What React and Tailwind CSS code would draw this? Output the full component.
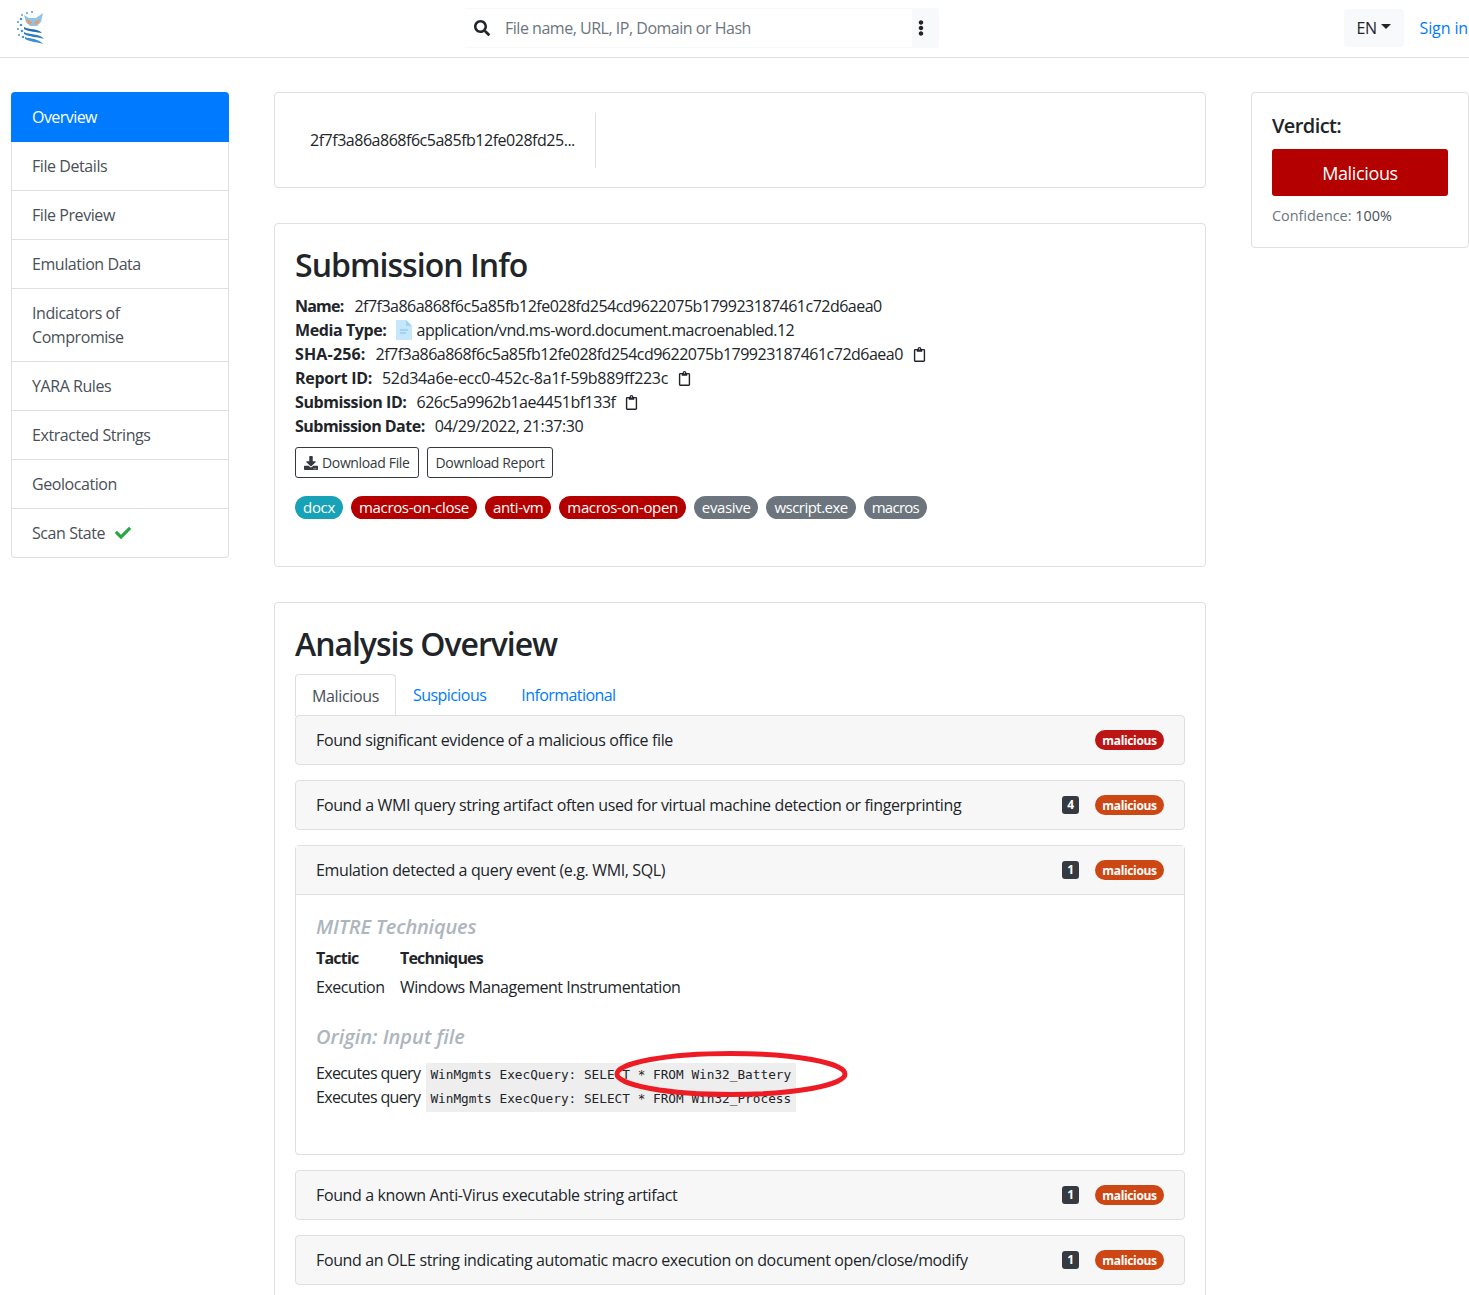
import React from 'react';
import { FaSearch, FaEllipsisV, FaDownload, FaCheck, FaRegClipboard } from 'react-icons/fa';

const navItems = ['File Details', 'File Preview', 'Emulation Data', 'Indicators of Compromise', 'YARA Rules', 'Extracted Strings', 'Geolocation'];

const tags = [
  { label: 'docx', color: 'bg-[#17a2b8] tracking-[-0.02em]' },
  { label: 'macros-on-close', color: 'bg-[#b50000]' },
  { label: 'anti-vm', color: 'bg-[#b50000]' },
  { label: 'macros-on-open', color: 'bg-[#b50000]' },
  { label: 'evasive', color: 'bg-[#6c757d]' },
  { label: 'wscript.exe', color: 'bg-[#6c757d] tracking-[-0.035em]' },
  { label: 'macros', color: 'bg-[#6c757d] tracking-[-0.05em]' },
];

const Logo = () => (
  <svg width="32" height="36" viewBox="0 0 32 36" fill="none">
    <path d="M9 5l5 3h7l7-5-2 9-4 4h-7l-4-4z" fill="#8cc4ec" />
    <path d="M11 9l6 3-1 2.5-3.5-1zM25 9l-6 3 1 2.5 3.5-1z" fill="#ea9a6c" />
    <path d="M9 17c5 3 14 1 18 6-5-1-13-1-18-4z" fill="#1f6db3" />
    <path d="M9 22c5 3 15 1 20 7-6-2-15-2-20-5z" fill="#2a7cc0" />
    <path d="M10 27c5 2 13 1 18 7-6-2-13-2-18-5z" fill="#3f8fce" />
    <g fill="#4a95d2">
      <circle cx="6" cy="9" r="1.3" /><circle cx="3" cy="12" r="1" /><circle cx="6" cy="15" r="1.3" />
      <circle cx="3" cy="19" r="1" /><circle cx="7" cy="21" r="1.3" /><circle cx="4" cy="25" r="1" />
      <circle cx="8" cy="27" r="1.3" /><circle cx="7" cy="5" r="0.9" /><circle cx="12" cy="3" r="0.9" /><circle cx="17" cy="2" r="1" />
    </g>
  </svg>
);

const FileIcon = () => (
  <svg className="mr-[4px] shrink-0" width="16" height="20" viewBox="0 0 16 20" fill="none">
    <path d="M1 0h9l6 6v13a1 1 0 0 1-1 1H1a1 1 0 0 1-1-1V1a1 1 0 0 1 1-1z" fill="#c5e6fb" />
    <path d="M10 0l6 6h-6z" fill="#9fd5f7" />
    <path d="M4 10h8M4 13h6" stroke="#94cdf5" strokeWidth="1.3" />
  </svg>
);

const Header = () => (
  <div className="flex h-[58px] items-center border-b border-[#dfdfdf] pb-px">
    <div className="ml-[15px] w-[449px] shrink-0"><Logo /></div>
    <div className="flex h-10 w-[475px] items-center rounded border-y border-[#f8f8f8]">
      <FaSearch className="ml-[10px] text-[#212529]" size={16} />
      <span className="ml-[15px] flex-1 tracking-[-0.03em] text-[#6c757d]">File name, URL, IP, Domain or Hash</span>
      <div className="flex h-10 w-[27px] items-center rounded-r bg-[#f8f9fa] pl-px text-[#212529]">
        <FaEllipsisV size={16} />
      </div>
    </div>
    <div className="ml-auto flex items-center">
      <div className="flex h-[38px] w-[60px] items-center justify-center gap-1 rounded bg-[#f8f9fa] text-[#212529]">
        EN
        <span className="mb-1 h-0 w-0 border-x-[5px] border-t-[5px] border-x-transparent border-t-[#212529]" />
      </div>
      <span className="ml-4 mr-px tracking-[-0.008em] text-[#007bff]">Sign in</span>
    </div>
  </div>
);

const Sidebar = () => (
  <div className="w-[218px] shrink-0 self-start tracking-[-0.027em]">
    <div className="flex h-[50px] items-center rounded-t bg-[#007bff] pl-[21px] tracking-[-0.035em] text-white">Overview</div>
    <div className="rounded-b border-x border-b border-[#dfdfdf] text-[#495057]">
      {navItems.map((item) => (
        <div key={item} className="border-b border-[#dfdfdf] py-3 pl-5 pr-5 leading-6">{item}</div>
      ))}
      <div className="flex items-center gap-[10px] py-3 pl-5 leading-6">
        Scan State
        <FaCheck className="text-[#28a745]" size={16} />
      </div>
    </div>
  </div>
);

const InfoRow = ({ label, value, copy, labelClass, valueClass, children }) => (
  <div className="flex h-6 items-center">
    <b className={`font-bold ${labelClass}`}>{label}</b>
    {children}
    <span className={valueClass}>{value}</span>
    {copy && <FaRegClipboard className="ml-[9px] text-[#212529]" size={15} />}
  </div>
);

const SubmissionInfo = () => (
  <div className="mt-[35px] h-[344px] rounded border border-[#dfdfdf] px-5 pt-[22px]">
    <h2 className="text-[32px] leading-[38px] font-semibold tracking-[-0.03em]">Submission Info</h2>
    <div className="mt-[10px] leading-6">
      <InfoRow label="Name:" labelClass="mr-[11px] tracking-[-0.05em]" valueClass="tracking-[-0.032em]" value="2f7f3a86a868f6c5a85fb12fe028fd254cd9622075b179923187461c72d6aea0" />
      <InfoRow label="Media Type:" labelClass="mr-[10px] tracking-[-0.025em]" valueClass="tracking-[-0.03em]" value="application/vnd.ms-word.document.macroenabled.12">
        <FileIcon />
      </InfoRow>
      <InfoRow label="SHA-256:" labelClass="mr-[10px] tracking-[0.01em]" valueClass="tracking-[-0.032em]" value="2f7f3a86a868f6c5a85fb12fe028fd254cd9622075b179923187461c72d6aea0" copy />
      <InfoRow label="Report ID:" labelClass="mr-[10px] tracking-[-0.02em]" valueClass="tracking-[-0.018em]" value="52d34a6e-ecc0-452c-8a1f-59b889ff223c" copy />
      <InfoRow label="Submission ID:" labelClass="mr-[10px] tracking-[-0.025em]" valueClass="tracking-[-0.032em]" value="626c5a9962b1ae4451bf133f" copy />
      <InfoRow label="Submission Date:" labelClass="mr-[10px] tracking-[-0.032em]" valueClass="tracking-[-0.025em]" value="04/29/2022, 21:37:30" />
    </div>
    <div className="mt-[9px] flex gap-2">
      <div className="flex h-[31px] items-center gap-1 rounded-[3px] border border-[#343a40] px-2 text-sm text-[#343a40]">
        <FaDownload size={14} />
        Download File
      </div>
      <div className="flex h-[31px] items-center rounded-[3px] border border-[#343a40] px-2 text-sm text-[#343a40]">Download Report</div>
    </div>
    <div className="mt-[18px] flex gap-2">
      {tags.map((t) => (
        <span key={t.label} className={`h-[23px] rounded-full px-2 text-[15px] leading-[23px] text-white ${t.color}`}>{t.label}</span>
      ))}
    </div>
  </div>
);

const SignalHeader = ({ title, count, color, open }) => (
  <div className={`flex items-center bg-[#f7f7f7] border-[#dfdfdf] pl-5 pr-5 ${open ? 'h-[49px] border-b' : 'h-[50px] rounded border'}`}>
    <span className="flex-1 tracking-[-0.0228em]">{title}</span>
    {count && (
      <span className="mr-4 flex h-[18px] w-[17px] items-center justify-center rounded-[3px] bg-[#343a40] text-xs font-bold text-white">{count}</span>
    )}
    <span className={`flex h-5 w-[69px] items-center justify-center rounded-full pt-px text-xs font-bold text-white ${color}`}>malicious</span>
  </div>
);

const QueryEllipse = () => (
  <svg className="absolute left-[317px] top-[154px]" width="236" height="50" viewBox="0 0 236 50" fill="none">
    <ellipse cx="118" cy="25" rx="114" ry="20.5" stroke="#ed1c24" strokeWidth="5" />
  </svg>
);

const OpenSignal = () => (
  <div className="rounded border border-[#dfdfdf]">
    <SignalHeader title="Emulation detected a query event (e.g. WMI, SQL)" count="1" color="bg-[#cc4714]" open />
    <div className="relative h-[259px] pl-5 pt-5">
      <h5 className="text-xl leading-6 font-semibold tracking-[-0.01em] italic text-[#adb5bd]">MITRE Techniques</h5>
      <div className="mt-[7px] grid grid-cols-[84px_1fr] leading-6 tracking-[-0.03em]">
        <b className="font-bold tracking-[-0.05em]">Tactic</b>
        <b className="font-bold tracking-[-0.05em]">Techniques</b>
        <span className="mt-[5px]">Execution</span>
        <span className="mt-[5px]">Windows Management Instrumentation</span>
      </div>
      <h5 className="mt-[26px] text-xl leading-6 font-semibold tracking-normal italic text-[#adb5bd]">Origin: Input file</h5>
      <div className="mt-[14px] flex leading-6">
        <div className="mr-[6px] -mt-[2px] tracking-[-0.04em]">
          <div>Executes query</div>
          <div>Executes query</div>
        </div>
        <div className="bg-[#eeeeee] pb-px pl-1 pr-[5px] font-['DejaVu_Sans_Mono',monospace] text-[12.75px] tracking-normal text-[#212529]">
          <div>WinMgmts ExecQuery: SELECT * FROM Win32_Battery</div>
          <div>WinMgmts ExecQuery: SELECT * FROM Win32_Process</div>
        </div>
      </div>
      <QueryEllipse />
    </div>
  </div>
);

const AnalysisOverview = () => (
  <div className="mt-[35px] rounded border border-[#dfdfdf] px-5 pb-5 pt-[22px]">
    <h2 className="text-[32px] leading-[38px] font-semibold tracking-[-0.032em]">Analysis Overview</h2>
    <div className="mt-[11px] flex h-[41px] items-center tracking-[-0.035em] text-[#007bff]">
      <div className="-mb-px flex h-[42px] w-[101px] items-center justify-center rounded-t border-x border-t border-[#dfdfdf] tracking-[-0.022em] text-[#495057]">Malicious</div>
      <div className="px-[17px]">Suspicious</div>
      <div className="ml-px px-[17px]">Informational</div>
    </div>
    <div className="flex flex-col gap-[15px]">
      <SignalHeader title="Found significant evidence of a malicious office file" color="bg-[#bb1515]" />
      <SignalHeader title="Found a WMI query string artifact often used for virtual machine detection or fingerprinting" count="4" color="bg-[#cc4714]" />
      <OpenSignal />
      <SignalHeader title="Found a known Anti-Virus executable string artifact" count="1" color="bg-[#cc4714]" />
      <SignalHeader title="Found an OLE string indicating automatic macro execution on document open/close/modify" count="1" color="bg-[#cc4714]" />
    </div>
  </div>
);

const Verdict = () => (
  <div className="w-[218px] shrink-0 self-start rounded border border-[#dfdfdf] px-5 pb-[19px] pt-[21px]">
    <h5 className="text-xl leading-6 font-semibold tracking-[-0.03em]">Verdict:</h5>
    <div className="mt-[11px] flex h-[47px] items-center justify-center rounded-[3px] bg-[#b50000] text-lg text-white">Malicious</div>
    <div className="mt-2 text-[14.4px] leading-6 tracking-normal"><span className="text-[#6c757d]">Confidence:</span> <span className="text-[#495057]">100%</span></div>
  </div>
);

const App = () => (
  <div className="h-screen overflow-hidden bg-white font-['Open_Sans',sans-serif] text-base tracking-[-0.022em] text-[#212529]">
    <Header />
    <div className="flex pl-[11px] pt-[34px]">
      <Sidebar />
      <div className="ml-[45px] flex w-[932px] shrink-0 flex-col">
        <div className="flex h-[96px] items-center rounded border border-[#dfdfdf] pl-[35px]">
          <div className="flex h-[55px] w-[286px] items-center border-r border-[#dfdfdf] tracking-[-0.03em]">2f7f3a86a868f6c5a85fb12fe028fd25...</div>
        </div>
        <SubmissionInfo />
        <AnalysisOverview />
      </div>
      <div className="ml-[45px]"><Verdict /></div>
    </div>
  </div>
);

export default App;
